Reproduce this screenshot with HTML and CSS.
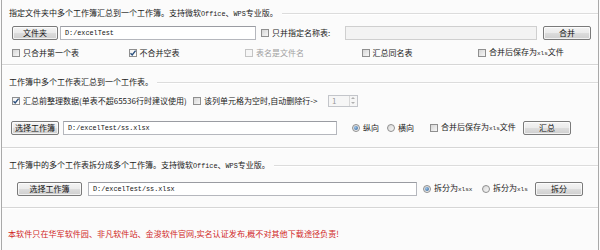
FILE: index.html
```html
<!DOCTYPE html>
<html lang="zh-CN">
<head>
<meta charset="utf-8">
<title>Excel 汇总拆分工具</title>
<link rel="stylesheet" href="styles.css">
</head>
<body>
<div class="window">
  <section class="group g1">
    <div class="legend"><span class="legend-text">指定文件夹中多个工作簿汇总到一个工作簿。支持微软<span class="lat">Office</span>、<span class="lat">WPS</span>专业版。</span></div>
    <div class="row row-folder">
      <button class="btn btn-folder">文件夹</button>
      <div class="input input-folder"><span class="path">D:/excelTest</span></div>
      <label class="chk chk-name"><i class="box"></i><span>只并指定名称表:</span></label>
      <div class="input input-name disabled"></div>
      <button class="btn btn-merge">合并</button>
    </div>
    <div class="opts">
      <label class="chk"><i class="box"></i><span>只合并第一个表</span></label>
      <label class="chk"><i class="box checked"><svg viewBox="0 0 8 8"><path d="M1.5 4.2 L3.2 6 L6.6 1.6"/></svg></i><span>不合并空表</span></label>
      <label class="chk off"><i class="box"></i><span>表名是文件名</span></label>
      <label class="chk"><i class="box"></i><span>汇总同名表</span></label>
      <label class="chk"><i class="box"></i><span>合并后保存为<span class="lat sm">xls</span>文件</span></label>
    </div>
  </section>

  <section class="group g2">
    <div class="legend"><span class="legend-text">工作簿中多个工作表汇总到一个工作表。</span></div>
    <div class="row row-tidy">
      <label class="chk chk-tidy"><i class="box checked"><svg viewBox="0 0 8 8"><path d="M1.5 4.2 L3.2 6 L6.6 1.6"/></svg></i><span>汇总前整理数据(单表不超65536行时建议使用)</span></label>
      <label class="chk chk-empty"><i class="box"></i><span>该列单元格为空时,自动删除行-&gt;</span></label>
      <div class="spin"><span class="spin-val">1</span><span class="spin-btns"><i class="up"></i><i class="down"></i></span></div>
    </div>
    <div class="row row-sum">
      <button class="btn btn-pick">选择工作簿</button>
      <div class="input input-sum"><span class="path">D:/excelTest/ss.xlsx</span></div>
      <label class="rad rad-v"><i class="dot checked"></i><span>纵向</span></label>
      <label class="rad rad-h"><i class="dot"></i><span>横向</span></label>
      <label class="chk chk-xls"><i class="box"></i><span>合并后保存为<span class="lat sm">xls</span>文件</span></label>
      <button class="btn btn-sum">汇总</button>
    </div>
  </section>

  <section class="group g3">
    <div class="legend"><span class="legend-text">工作簿中的多个工作表拆分成多个工作簿。支持微软<span class="lat">Office</span>、<span class="lat">WPS</span>专业版。</span></div>
    <div class="row row-split">
      <button class="btn btn-pick2">选择工作簿</button>
      <div class="input input-split"><span class="path">D:/excelTest/ss.xlsx</span></div>
      <label class="rad rad-xlsx"><i class="dot checked"></i><span>拆分为<span class="lat sm">xlsx</span></span></label>
      <label class="rad rad-xls"><i class="dot"></i><span>拆分为<span class="lat sm">xls</span></span></label>
      <button class="btn btn-split">拆分</button>
    </div>
  </section>

  <p class="notice">本软件只在华军软件园、非凡软件站、金浚软件官网,实名认证发布,概不对其他下载途径负责!</p>
</div>
</body>
</html>
```

FILE: styles.css
```css
* { box-sizing: border-box; }
html, body { margin: 0; padding: 0; }
body {
  background: #fbfbfb;
  font-family: "Noto Sans CJK SC", "Liberation Sans", sans-serif;
  font-size: 8px;
  line-height: 10px;
  color: #1a1a1a;
}
.window {
  width: 598px;
  height: 250px;
  margin-left: 1px;
  border-left: 1px solid #a9a9a9;
  border-right: 1px solid #a9a9a9;
  display: flex;
  flex-direction: column;
}
.lat { font-family: "Liberation Mono", monospace; font-size: 6.8px; }
.lat.sm { font-size: 6px; }

.group {
  border-bottom: 1px solid #d6d6d6;
  box-shadow: 0 1px 0 #ffffff;
}
.legend {
  display: flex;
  align-items: center;
  height: 10px;
  padding-left: 7px;
}
.legend::after {
  content: "";
  flex: 1;
  height: 1px;
  margin-left: 4px;
  background: #dcdcdc;
  box-shadow: 0 1px 0 #fff;
}
.legend-text { white-space: nowrap; }

.g1 { margin-top: 8px; padding-bottom: 7px; }
.g2 { margin-top: 12px; padding-bottom: 12px; }
.g3 { margin-top: 12px; padding-bottom: 11px; }

.row { display: flex; align-items: center; height: 14px; }

/* controls */
.btn {
  height: 14px;
  padding: 0;
  font: inherit;
  color: #111;
  border: 1px solid #7a7a7a;
  border-radius: 2px;
  background: linear-gradient(#f4f4f4 0%, #ebebeb 50%, #dddddd 51%, #cfcfcf 100%);
  box-shadow: inset 0 0 0 1px rgba(255,255,255,0.7);
  text-align: center;
  flex: none;
}
.input {
  height: 14px;
  border: 1px solid #b5b7bd;
  border-top-color: #9a9ca2;
  background: #fff;
  display: flex;
  align-items: center;
  padding-left: 4px;
  flex: none;
}
.input.disabled { background: #f3f3f3; border-color: #cfcfcf; }
.path { font-family: "Liberation Mono", monospace; font-size: 6.8px; color: #111; }

.chk, .rad { display: flex; align-items: center; white-space: nowrap; flex: none; }
.chk > span, .rad > span { margin-left: 3px; }
.box {
  width: 8px; height: 8px;
  border: 1px solid #8f8f8f;
  background: linear-gradient(135deg, #d6d6d6, #f7f7f7);
  flex: none;
  display: block;
  position: relative;
}
.box svg { position: absolute; left: -1px; top: -1px; width: 8px; height: 8px; }
.box svg path { fill: none; stroke: #2a4f7d; stroke-width: 1.4; }
.box.checked { background: linear-gradient(135deg, #f2f2f2, #ffffff); }
.chk.off { color: #a0a0a0; }
.chk.off .box { border-color: #c4c4c4; background: #f6f6f6; }

.dot {
  width: 8px; height: 8px;
  border: 1px solid #8f8f8f;
  border-radius: 50%;
  background: linear-gradient(135deg, #d8d8d8, #f8f8f8);
  flex: none;
  display: block;
  position: relative;
}
.dot.checked::after {
  content: "";
  position: absolute;
  left: 1px; top: 1px;
  width: 4px; height: 4px;
  border-radius: 50%;
  background: radial-gradient(circle at 35% 35%, #9cc4ea, #2b5d92);
}

/* group 1 */
.row-folder { margin-top: 8px; padding-left: 10px; padding-right: 7px; }
.btn-folder { width: 46px; }
.input-folder { width: 196px; margin-left: 2px; }
.chk-name { margin-left: 5px; }
.input-name { width: 192px; margin-left: auto; }
.btn-merge { width: 48px; margin-left: 6px; }

.opts {
  display: grid;
  grid-template-columns: repeat(5, 116.5px);
  padding-left: 10px;
  margin-top: 7px;
  height: 10px;
  align-items: center;
}

/* group 2 */
.row-tidy { margin-top: 8px; padding-left: 10px; height: 12px; }
.chk-tidy { width: 181px; }
.chk-empty { width: 135px; }
.spin {
  width: 30px; height: 12px;
  border: 1px solid #c3c5ca;
  background: #f6f6f6;
  display: flex;
  align-items: center;
  justify-content: space-between;
  padding-left: 3px;
  color: #9a9a9a;
}
.spin-btns {
  width: 8px; height: 10px;
  display: flex;
  flex-direction: column;
  border-left: 1px solid #d8d8d8;
}
.spin-btns i { flex: 1; display: block; position: relative; }
.spin-btns i::after {
  content: "";
  position: absolute;
  left: 1px; top: 1px;
  border-left: 2px solid transparent;
  border-right: 2px solid transparent;
}
.spin-btns .up::after { border-bottom: 2px solid #b0b0b0; }
.spin-btns .down::after { border-top: 2px solid #b0b0b0; }

.row-sum { margin-top: 14px; padding-left: 9px; }
.btn-pick { width: 48px; }
.input-sum { width: 274px; margin-left: 4px; }
.rad-v { margin-left: 15px; width: 35px; }
.rad-h { width: 43px; }
.chk-xls { width: 93px; }
.btn-sum { width: 48px; }

/* group 3 */
.row-split { margin-top: 12px; padding-left: 15px; }
.btn-pick2 { width: 65px; }
.input-split { width: 329px; margin-left: 6px; }
.rad-xlsx { margin-left: 6px; width: 59px; }
.rad-xls { width: 53px; }
.btn-split { width: 48px; }

.notice {
  margin: 21px 0 0 6px;
  color: #d02626;
  font-size: 8.1px;
  white-space: nowrap;
}
```
